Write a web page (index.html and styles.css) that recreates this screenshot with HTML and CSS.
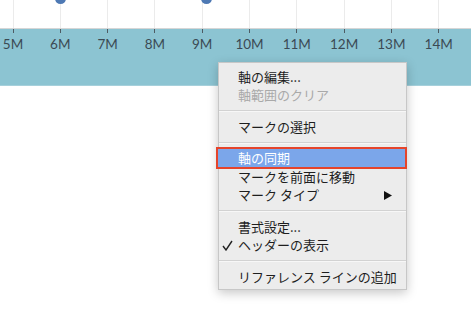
FILE: index.html
```html
<!DOCTYPE html>
<html lang="ja">
  <head>
    <meta charset="UTF-8" />
    <title>軸メニュー</title>
    <link rel="stylesheet" href="styles.css">
  </head>
  <body>
    <div class="chart">
      <div class="plot">
        <div class="cell"></div>
        <div class="cell"><span class="dot"></span></div>
        <div class="cell"></div>
        <div class="cell"></div>
        <div class="cell"><span class="dot dot-off"></span></div>
        <div class="cell"></div>
        <div class="cell"></div>
        <div class="cell"></div>
        <div class="cell"></div>
        <div class="cell"></div>
      </div>
      <div class="axis">
        <div class="tick">5M</div>
        <div class="tick">6M</div>
        <div class="tick">7M</div>
        <div class="tick">8M</div>
        <div class="tick">9M</div>
        <div class="tick">10M</div>
        <div class="tick">11M</div>
        <div class="tick">12M</div>
        <div class="tick">13M</div>
        <div class="tick">14M</div>
      </div>
    </div>

    <ul class="menu">
      <li class="item">軸の編集...</li>
      <li class="item disabled">軸範囲のクリア</li>
      <li class="sep"></li>
      <li class="item">マークの選択</li>
      <li class="sep"></li>
      <li class="item active">軸の同期</li>
      <li class="item">マークを前面に移動</li>
      <li class="item">マーク タイプ
        <svg class="arrow" width="8" height="9" viewBox="0 0 8 9"><polygon points="0,0 8,4.5 0,9" fill="#111"/></svg>
      </li>
      <li class="sep"></li>
      <li class="item">書式設定...</li>
      <li class="item">
        <svg class="check" width="11" height="11" viewBox="0 0 11 11"><polyline points="1,6 4,10 10,1" fill="none" stroke="#222" stroke-width="1.4"/></svg>
        ヘッダーの表示
      </li>
      <li class="sep"></li>
      <li class="item">リファレンス ラインの追加</li>
    </ul>
  </body>
</html>
```

FILE: styles.css
```css
* {
  margin: 0;
  padding: 0;
  box-sizing: border-box;
}

body {
  width: 471px;
  height: 321px;
  overflow: hidden;
  background: #fff;
  font-family: "Lato", "Noto Sans CJK JP", sans-serif;
}

.chart {
  width: 471px;
  overflow: hidden;
}

.plot {
  display: flex;
  height: 29px;
  margin-left: -10.65px;
  border-bottom: 1px solid #d6d6d6;
}

.cell {
  flex: 0 0 47.3px;
  height: 100%;
  display: flex;
  justify-content: center;
  background: linear-gradient(#ebebeb, #ebebeb) no-repeat center / 1px 100%;
}

.dot {
  width: 11px;
  height: 11px;
  margin-top: -7px;
  border-radius: 50%;
  background: #4e79b4;
}

.dot-off {
  transform: translateX(4px);
}

.axis {
  display: flex;
  height: 57px;
  margin-left: -10.65px;
  background: #8cc4d2;
  border-bottom: 1px solid #a6d0db;
}

.tick {
  flex: 0 0 47.3px;
  text-align: center;
  padding-top: 7px;
  font-size: 13.5px;
  color: #3b4a54;
  background: linear-gradient(#4d5b63, #4d5b63) no-repeat center top / 1px 4px;
}

.menu {
  position: absolute;
  left: 218px;
  top: 62px;
  width: 189px;
  height: 228px;
  padding-top: 4px;
  list-style: none;
  background: #ececec;
  border: 1px solid #c7c7c7;
  box-shadow: 0 3px 10px rgba(0, 0, 0, 0.22);
  font-family: "Noto Sans CJK JP", sans-serif;
  font-size: 13px;
  color: #1e1e1e;
}

.item {
  display: flex;
  align-items: center;
  height: 18.5px;
  padding-left: 19px;
  position: relative;
}

.disabled {
  color: #a9a9a9;
}

.active {
  background: #7ba6ea;
  color: #fff;
  outline: 2px solid #e5442b;
  margin-left: -1px;
  margin-right: 1px;
  padding-left: 20px;
}

.sep {
  height: 1px;
  margin: 6px 0;
  background: #d2d2d2;
  box-shadow: 0 1px 0 #f7f7f7;
}

.arrow {
  position: absolute;
  right: 14px;
  top: 5px;
}

.check {
  position: absolute;
  left: 3px;
  top: 4px;
}
```
